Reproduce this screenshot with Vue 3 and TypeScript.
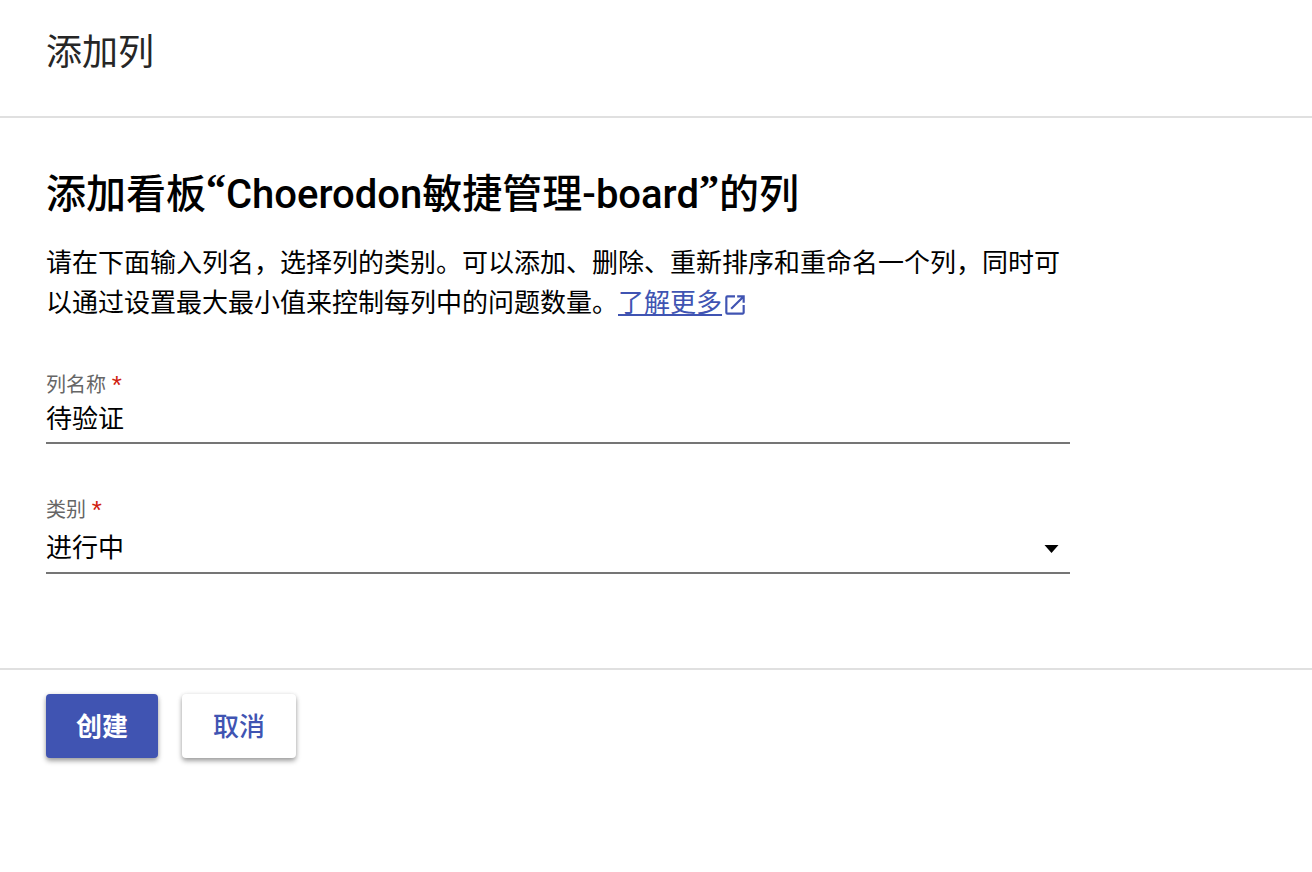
<script setup lang="ts">
import { ref } from 'vue'

const boardName = 'Choerodon敏捷管理-board'
const columnName = ref('待验证')
const category = ref('进行中')
const categories: string[] = ['待处理', '进行中', '已完成']
</script>

<template>
  <main class="panel">
    <header class="panel-header">
      <h1>添加列</h1>
    </header>
    <form id="column-form" class="content" @submit.prevent>
      <h2>添加看板<span class="quote">“</span>{{ boardName }}<span class="quote">”</span>的列</h2>
      <p>
        请在下面输入列名，选择列的类别。可以添加、删除、重新排序和重命名一个列，同时可以通过设置最大最小值来控制每列中的问题数量。<a
          href="#"
          ><span>了解更多</span
          ><svg viewBox="0 0 24 24" aria-hidden="true">
            <path
              fill="currentColor"
              d="M19 19H5V5h7V3H5a2 2 0 0 0-2 2v14a2 2 0 0 0 2 2h14c1.1 0 2-.9 2-2v-7h-2v7zM14 3v2h3.59l-9.83 9.83 1.41 1.41L19 6.41V10h2V3h-7z"
            /></svg
        ></a>
      </p>
      <div class="field">
        <label for="column-name">列名称 <span class="required">*</span></label>
        <input id="column-name" v-model="columnName" type="text" required />
      </div>
      <div class="field">
        <label for="column-category">类别 <span class="required">*</span></label>
        <div class="select">
          <select id="column-category" v-model="category" required>
            <option v-for="item in categories" :key="item">{{ item }}</option>
          </select>
          <svg viewBox="0 0 14 8" aria-hidden="true"><path d="M0 0h14L7 8z" /></svg>
        </div>
      </div>
    </form>
    <footer class="actions">
      <button class="primary" type="submit" form="column-form">创建</button>
      <button type="button">取消</button>
    </footer>
  </main>
</template>

<style>
body {
  margin: 0;
  background: #fff;
}
</style>

<style scoped>
.panel {
  font-family: Inter, 'Noto Sans CJK SC', sans-serif;
  font-size: 26px;
  line-height: 40px;
  color: #000;
}

.panel-header {
  padding: 24px 46px 36px;
  border-bottom: 2px solid #e0e0e0;
}

h1 {
  margin: 0;
  font-size: 36px;
  font-weight: 400;
  line-height: 56px;
  color: #262626;
}

.content {
  max-width: 1024px;
  padding: 49px 46px 94px;
}

h2 {
  margin: 0 0 20px;
  font-family: Roboto, 'Noto Sans CJK SC', sans-serif;
  font-size: 40px;
  font-weight: 500;
  line-height: 56px;
}

.quote {
  font-family: 'Liberation Serif', serif;
  font-weight: 700;
  line-height: 36px;
  vertical-align: 6px;
}

p {
  margin: 0 0 48px;
}

a {
  color: #4054b2;
  text-decoration: none;
}

a span {
  text-decoration: underline;
  text-decoration-thickness: 2px;
  text-underline-offset: 2px;
  text-decoration-skip-ink: none;
}

a svg {
  width: 26px;
  height: 26px;
  vertical-align: -6px;
}

.field {
  display: flex;
  flex-direction: column;
  border-bottom: 2px solid #757575;
}

.field + .field {
  margin-top: 52px;
}

label {
  height: 28px;
  font-size: 20px;
  line-height: 28px;
  color: #666;
}

.required {
  font-family: 'Liberation Sans', sans-serif;
  font-size: 26px;
  line-height: 20px;
  vertical-align: -2px;
  color: #d0200e;
}

input,
select {
  box-sizing: border-box;
  width: 100%;
  height: 44px;
  padding: 0;
  border: 0;
  outline: 0;
  background: transparent;
  font: inherit;
  color: inherit;
  appearance: none;
}

input {
  height: 43px;
  padding-bottom: 8px;
}

.select {
  display: flex;
  align-items: center;
  padding: 3px 11px 1px 0;
}

select {
  padding-bottom: 2px;
}

.select svg {
  flex: none;
  width: 15px;
  height: 8px;
}

.actions {
  display: flex;
  gap: 24px;
  padding: 24px 46px;
  border-top: 2px solid #e0e0e0;
}

button {
  height: 64px;
  padding: 2px 31px 0;
  border: 0;
  border-radius: 4px;
  background: #fff;
  box-shadow: 0 3px 5px rgba(0, 0, 0, 0.36), 0 0 4px rgba(0, 0, 0, 0.08);
  font: inherit;
  font-weight: 500;
  color: #4054b2;
}

.primary {
  padding: 2px 30px 0;
  background: #4054b2;
  font-weight: 700;
  color: #fff;
}
</style>
